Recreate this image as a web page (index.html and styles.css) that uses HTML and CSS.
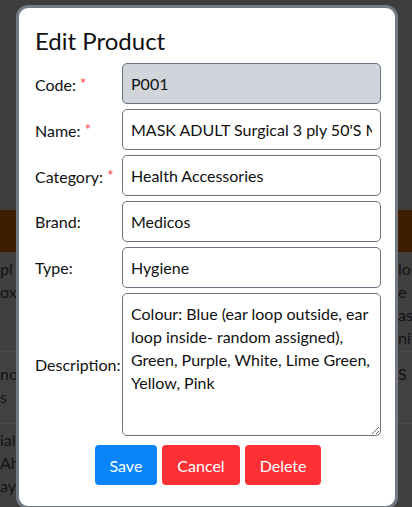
FILE: index.html
```html
<!DOCTYPE html>
<html lang="en">
<head>
<meta charset="utf-8">
<title>Edit Product</title>
<link rel="stylesheet" href="styles.css">
</head>
<body>
<div class="page">
  <div class="page-top"></div>
  <div class="page-bar"></div>
  <div class="page-row row-a">
    <div class="cell cell-left"><span>pl</span><span>ox</span></div>
    <div class="cell cell-right"><span>lo</span><span>e</span><span>as</span><span>nit</span></div>
  </div>
  <div class="page-row row-b">
    <div class="cell cell-left"><span>nov</span><span>s</span></div>
    <div class="cell cell-right"><span>S</span></div>
  </div>
  <div class="page-row row-c">
    <div class="cell cell-left"><span>ial</span><span>Ah</span><span>ays</span></div>
    <div class="cell cell-right"></div>
  </div>
</div>

<div class="modal">
  <h4 class="modal-title">Edit Product</h4>
  <form class="form">
    <label class="label" for="code">Code: <span class="req">*</span></label>
    <input class="input input-disabled" id="code" type="text" value="P001" readonly>

    <label class="label" for="name">Name: <span class="req">*</span></label>
    <input class="input" id="name" type="text" value="MASK ADULT Surgical 3 ply 50'S MEDICOS">

    <label class="label" for="category">Category: <span class="req">*</span></label>
    <input class="input" id="category" type="text" value="Health Accessories">

    <label class="label" for="brand">Brand:</label>
    <input class="input" id="brand" type="text" value="Medicos">

    <label class="label" for="type">Type:</label>
    <input class="input" id="type" type="text" value="Hygiene">

    <label class="label" for="desc">Description:</label>
    <textarea class="input textarea" id="desc">Colour: Blue (ear loop outside, ear loop inside- random assigned), Green, Purple, White, Lime Green, Yellow, Pink</textarea>

    <div class="actions">
      <button type="button" class="btn btn-save">Save</button>
      <button type="button" class="btn btn-danger">Cancel</button>
      <button type="button" class="btn btn-danger">Delete</button>
    </div>
  </form>
</div>
</body>
</html>
```

FILE: styles.css
```css
* { box-sizing: border-box; }

html, body {
  margin: 0;
  padding: 0;
  height: 100%;
  overflow: hidden;
}

body {
  background: #404040;
  font-family: "Lato", "Noto Sans", sans-serif;
  color: #111;
}

/* dimmed page behind the modal */
.page {
  display: flex;
  flex-direction: column;
  height: 507px;
}
.page-top { height: 210px; background: #3d3d3d; }
.page-bar { height: 42px; background: #3f1d00; }
.page-row {
  display: flex;
  justify-content: space-between;
  border-bottom: 1px solid #4a4a4a;
  font-size: 16px;
  color: #121212;
}
.row-a { height: 100px; padding-top: 5px; }
.row-b { height: 72px; padding-top: 10px; background: #424242; }
.row-c { flex: 1; padding-top: 4px; border-bottom: 0; }
.cell { display: flex; flex-direction: column; line-height: 23px; }
.cell-left { width: 17px; overflow: hidden; }
.cell-right { width: 14px; overflow: hidden; }

/* modal */
.modal {
  position: absolute;
  left: 16px;
  top: 5px;
  width: 382px;
  height: 504px;
  background: #fff;
  border: 3px solid #737a84;
  border-radius: 12px;
  padding: 17px 14px 0 16px;
}

.modal-title {
  margin: 0 0 6px 0;
  font-size: 24px;
  font-weight: 400;
  line-height: 32px;
  color: #111;
}

.form {
  display: grid;
  grid-template-columns: 87px 259px;
  row-gap: 5px;
  align-items: center;
}

.label {
  font-size: 16px;
  color: #111;
  white-space: nowrap;
}
.req {
  color: #ff3b3b;
  font-size: 15px;
  vertical-align: 2px;
}

.input {
  width: 259px;
  height: 41px;
  border: 1px solid #6b7280;
  border-radius: 5px;
  padding: 0 8px;
  font-family: inherit;
  font-size: 16px;
  color: #111;
  background: #fff;
  outline: none;
}
.input-disabled { background: #d1d5db; }

.textarea {
  display: block;
  height: 143px;
  padding: 8px 8px;
  line-height: 23px;
  resize: vertical;
  overflow: hidden;
}

.actions {
  grid-column: 1 / -1;
  display: flex;
  justify-content: center;
  gap: 5px;
  margin-top: 4px;
}

.btn {
  height: 40px;
  padding: 0 15px;
  border: 0;
  border-radius: 4px;
  font-family: inherit;
  font-size: 16px;
  color: #fff;
}
.btn-save { background: #0a84fb; }
.btn-danger { background: #fd3135; }
```
